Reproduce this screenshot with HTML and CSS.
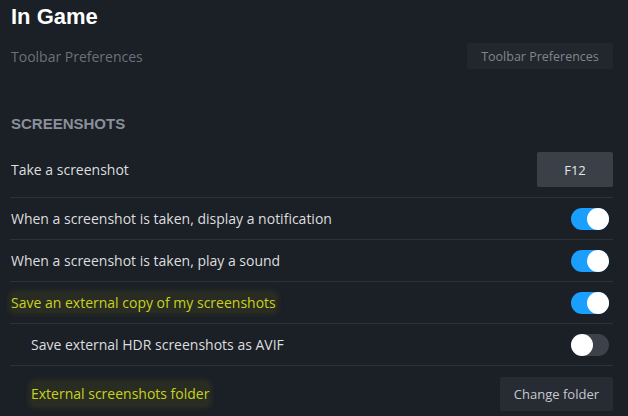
FILE: index.html
```html
<!DOCTYPE html>
<html lang="en">
  <head>
    <meta charset="UTF-8" />
    <meta name="viewport" content="width=device-width, initial-scale=1.0" />
    <title>In Game</title>
    <link rel="stylesheet" href="styles.css">
  </head>
  <body>
    <div class="page">
      <h1 class="title">In Game</h1>

      <div class="pref-row faded">
        <span class="label">Toolbar Preferences</span>
        <button class="btn btn-dim">Toolbar Preferences</button>
      </div>

      <h2 class="section">Screenshots</h2>

      <div class="row row-key">
        <span class="label">Take a screenshot</span>
        <button class="btn btn-key">F12</button>
      </div>
      <div class="row">
        <span class="label">When a screenshot is taken, display a notification</span>
        <div class="toggle on"><div class="knob"></div></div>
      </div>
      <div class="row">
        <span class="label">When a screenshot is taken, play a sound</span>
        <div class="toggle on"><div class="knob"></div></div>
      </div>
      <div class="row">
        <span class="label marked">Save an external copy of my screenshots</span>
        <div class="toggle on"><div class="knob"></div></div>
      </div>
      <div class="row sub">
        <span class="label">Save external HDR screenshots as AVIF</span>
        <div class="toggle"><div class="knob"></div></div>
      </div>
      <div class="row sub row-last">
        <span class="label marked">External screenshots folder</span>
        <button class="btn">Change folder</button>
      </div>
    </div>
  </body>
</html>
```

FILE: styles.css
```css
body {
  margin: 0;
  background: #1b1f26;
  font-family: "Open Sans", "Liberation Sans", Arial, sans-serif;
  color: #dcdedf;
  overflow: hidden;
}
.page {
  padding: 4px 15px 0 11px;
}
.title {
  margin: 0;
  font-family: "Liberation Sans", Arial, sans-serif;
  font-size: 22px;
  line-height: 26px;
  font-weight: bold;
  color: #ffffff;
}
.pref-row {
  display: flex;
  justify-content: space-between;
  align-items: center;
  margin-top: 13px;
  height: 26px;
}
.faded .label {
  color: #6c7179;
}
.section {
  margin: 46px 0 12px;
  font-family: "Liberation Sans", Arial, sans-serif;
  font-size: 15px;
  line-height: 18px;
  font-weight: bold;
  text-transform: uppercase;
  color: #8a9099;
}
.label {
  font-size: 14px;
}
.row {
  display: flex;
  justify-content: space-between;
  align-items: center;
  min-height: 41px;
  border-bottom: 1px solid #2d323a;
  margin-left: -1px;
  padding-left: 1px;
}
.row-key {
  padding: 7px 0 10px 1px;
  min-height: 0;
}
.row-last {
  border-bottom: none;
  padding-top: 11px;
  align-items: flex-start;
}
.row-last .label {
  line-height: 24px;
  margin-top: 5px;
}
.sub .label {
  margin-left: 20px;
}
.marked {
  color: #c8d21e;
  background: rgba(160, 170, 0, 0.1);
  box-shadow: 0 0 5px 3px rgba(160, 170, 0, 0.1);
  border-radius: 4px;
}
.btn {
  font-family: inherit;
  font-size: 13px;
  border: none;
  border-radius: 2px;
  background: #272b33;
  color: #c6c9ce;
  height: 34px;
  padding: 0 14px;
}
.btn-dim {
  height: 26px;
  font-size: 12.5px;
  color: #80858d;
  background: #22262d;
  width: 146px;
  padding: 0;
}
.btn-key {
  width: 76px;
  height: 35px;
  background: #3b3f48;
  color: #e6e7e9;
  font-size: 13px;
}
.toggle {
  width: 38px;
  height: 22px;
  border-radius: 11px;
  background: #3d414a;
  display: flex;
  margin-right: 4px;
}
.toggle.on {
  background: #1a9fff;
  justify-content: flex-end;
}
.knob {
  width: 22px;
  height: 22px;
  border-radius: 50%;
  background: #ffffff;
}
```
